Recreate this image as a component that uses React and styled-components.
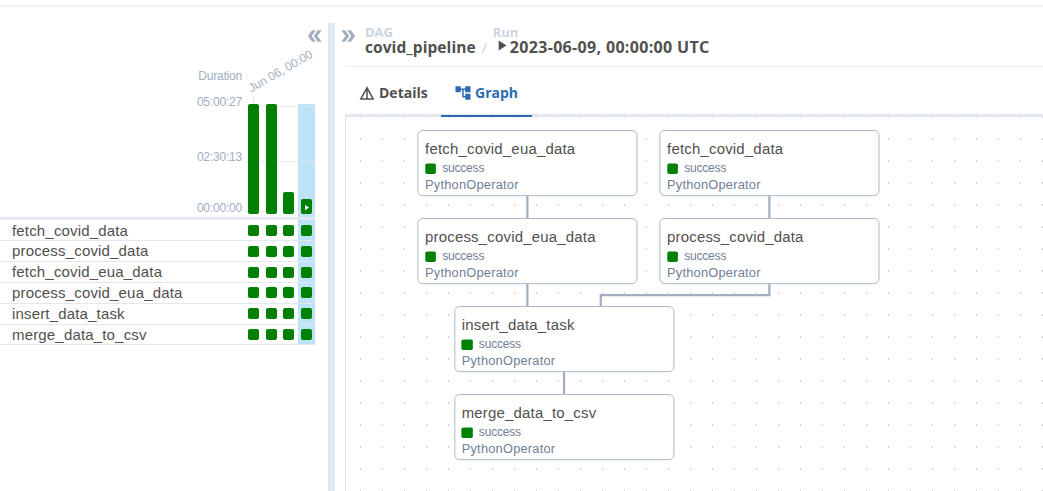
import React from "react";
import styled, { createGlobalStyle } from "styled-components";
import {
  MdDoubleArrow,
  MdAccountTree,
  MdDetails,
  MdPlayArrow,
} from "react-icons/md";

const color = {
  text: "#51504f",
  muted: "#a0aec0",
  faint: "#cbd5e0",
  slate: "#718096",
  line: "#e2e8f0",
  lineSoft: "#edf2f7",
  selected: "#bee3f8",
  success: "#008000",
  accent: "#2b6cb0",
};

const arial = `"Liberation Sans", Arial, sans-serif`;
const humanist = `"Open Sans", "Noto Sans", sans-serif`;

const GlobalStyle = createGlobalStyle`
  *, *::before, *::after { box-sizing: border-box; }
  body {
    margin: 0;
    background: #fff;
    color: ${color.text};
    font-family: ${arial};
    overflow: hidden;
  }
  svg { display: block; }
`;

const Page = styled.div`
  display: flex;
  flex-direction: column;
  width: 1043px;
  height: 491px;
  overflow: hidden;
`;

const TopRule = styled.div`
  flex: none;
  height: 7px;
  border-bottom: 2px solid ${color.lineSoft};
`;

const Main = styled.main`
  flex: 1;
  display: flex;
  min-height: 0;
`;

const Divider = styled.div`
  flex: none;
  width: 7px;
  margin-top: 16px;
  background: ${color.line};
`;

/* ---------- grid side ---------- */

const GridPanel = styled.section`
  flex: none;
  width: 328px;
  display: flex;
  flex-direction: column;
`;

const GridToolbar = styled.div`
  height: 62px;
  display: flex;
  justify-content: flex-end;
  padding: 19px 3px 0 0;
`;

const CollapseButton = styled.span`
  display: block;
  width: 20px;
  height: 20px;
  color: ${color.muted};
  transform: ${(p) => (p.$flip ? "rotate(180deg)" : "none")};
`;

const DurationChart = styled.div`
  display: flex;
  width: 315px;
  height: 151px;
  border-bottom: 3px solid ${color.line};
`;

const Axis = styled.div`
  width: 245px;
  padding-right: 3px;
  text-align: right;
`;

const AxisLabel = styled.div`
  height: 14px;
  line-height: 14px;
  margin-bottom: ${(p) => p.$gap || 0}px;
  font-size: 12px;
  letter-spacing: -0.2px;
  color: ${color.muted};
`;

const Plot = styled.div`
  position: relative;
  width: 70px;
  padding-top: 35px;
`;

const DateTick = styled.div`
  position: absolute;
  left: 8px;
  top: 27px;
  width: 1px;
  height: 8px;
  background: ${color.line};
`;

const DateLabel = styled.div`
  position: absolute;
  left: 8px;
  top: 12px;
  font-size: 12px;
  line-height: 14px;
  letter-spacing: -0.1px;
  white-space: nowrap;
  color: ${color.muted};
  transform-origin: 0 100%;
  transform: rotate(-30deg);
`;

const GridLine = styled.div`
  position: absolute;
  left: 0;
  right: 0;
  top: ${(p) => p.$top}px;
  height: 1px;
  background: ${color.line};
  opacity: 0.8;
`;

const Slots = styled.div`
  display: flex;
  height: ${(p) => (p.$tall ? "113px" : "100%")};
  width: 70px;
`;

const Slot = styled.div`
  flex: 1;
  display: flex;
  justify-content: center;
  align-items: ${(p) => (p.$bars ? "flex-end" : "flex-start")};
  padding-bottom: ${(p) => (p.$bars ? 3 : 0)}px;
  background: ${(p) => (p.$selected ? color.selected : "transparent")};
`;

const Bar = styled.div`
  position: relative;
  z-index: 1;
  width: 11px;
  border-radius: 2px;
  background: ${color.success};
  color: #fff;
  display: flex;
  align-items: center;
  justify-content: center;
  padding-top: 2px;
`;

const TaskList = styled.div`
  width: 315px;
`;

const TaskName = styled.div`
  width: 245px;
  padding-left: 12px;
  font-size: 15px;
  line-height: 20px;
  letter-spacing: 0.17px;
`;

const TaskRow = styled.div`
  display: flex;
  height: 21px;
  border-bottom: 1px solid ${color.line};
  &:last-child { height: 20px; }
  ${Slot} { padding-top: 4px; }
  &:nth-child(-n + 3) ${Slot} { padding-top: 5px; }
  &:first-child ${TaskName} { line-height: 22px; }
`;

const StatusBox = styled.span`
  display: block;
  flex: none;
  width: 11px;
  height: 11px;
  border-radius: 2px;
  background: ${color.success};
`;

/* ---------- details side ---------- */

const DetailsPanel = styled.section`
  flex: 1;
  min-width: 0;
  display: flex;
  flex-direction: column;
`;

const Header = styled.header`
  display: flex;
  height: 59px;
  padding: 19px 0 0 3px;
`;

const Crumbs = styled.nav`
  display: flex;
  margin-left: 7px;
  font-family: ${humanist};
`;

const Crumb = styled.div`
  display: flex;
  flex-direction: column;
`;

const CrumbLabel = styled.span`
  height: 13px;
  line-height: 13px;
  font-size: 13px;
  font-weight: 700;
  color: ${color.faint};
`;

const CrumbValue = styled.span`
  display: flex;
  height: 18px;
  line-height: 17px;
  font-size: ${(p) => (p.$date ? 16 : 15.5)}px;
  letter-spacing: ${(p) => (p.$date ? 0.33 : 0.08)}px;
  font-weight: 700;
  white-space: nowrap;
`;

const Slash = styled.span`
  width: 17px;
  padding-top: 12px;
  text-align: center;
  font-size: 15px;
  line-height: 18px;
  color: ${color.faint};
`;

const PlayMark = styled.span`
  width: 17px;
  height: 16px;
  margin-top: -2px;
`;

const Body = styled.div`
  flex: 1;
  display: flex;
  flex-direction: column;
  margin-left: 10px;
  min-height: 0;
  border-top: 1px solid ${color.lineSoft};
`;

const Tabs = styled.div`
  flex: none;
  display: flex;
  height: 50px;
  box-shadow: inset 0 -3px 0 ${color.line};
`;

const Tab = styled.div`
  display: flex;
  align-items: center;
  gap: 3px;
  width: ${(p) => p.$width}px;
  padding: 4px 0 0 13px;
  border-bottom: 2px solid ${(p) => (p.$active ? color.accent : "transparent")};
  color: ${(p) => (p.$active ? color.accent : color.text)};
  font-family: ${humanist};
  font-size: 14px;
  font-weight: 700;
`;

const TabText = styled.span`
  margin-top: -2px;
`;

const Canvas = styled.div`
  position: relative;
  flex: 1;
  overflow: hidden;
  border-left: 1px solid ${color.line};
`;

const Dots = styled.svg`
  position: absolute;
  inset: 0;
  width: 100%;
  height: 100%;
`;

const Plane = styled.div`
  position: absolute;
  left: 0;
  top: 0;
  transform-origin: 0 0;
  transform: translate(71.4px, 13.1px) scale(0.88);
`;

const Edges = styled.svg`
  position: absolute;
  left: 0;
  top: 0;
  overflow: visible;
`;

const Node = styled.div`
  position: absolute;
  left: ${(p) => p.$x}px;
  top: ${(p) => p.$y}px;
  width: 250px;
  height: 75px;
  padding: 9px 7.7px;
  border: 1.3px solid ${color.muted};
  border-radius: 6px;
  background: #fff;
`;

const NodeTitle = styled.div`
  height: 24px;
  line-height: 24px;
  font-size: 17px;
  letter-spacing: 0.22px;
`;

const NodeStatus = styled.div`
  display: flex;
  align-items: center;
  gap: 7px;
  height: 19px;
  font-size: 13.6px;
  letter-spacing: -0.2px;
  color: ${color.slate};
`;

const NodeBox = styled(StatusBox)`
  width: 12.5px;
  height: 12.5px;
  margin-top: 1px;
`;

const NodeOperator = styled.div`
  height: 18px;
  line-height: 18px;
  font-size: 14.6px;
  letter-spacing: 0.24px;
  color: ${color.slate};
`;

const runs = [{ height: 110 }, { height: 110 }, { height: 22 }, { height: 15, running: true }];

const tasks = [
  "fetch_covid_data",
  "process_covid_data",
  "fetch_covid_eua_data",
  "process_covid_eua_data",
  "insert_data_task",
  "merge_data_to_csv",
];

const nodes = [
  { name: "fetch_covid_eua_data", x: 0, y: 0 },
  { name: "fetch_covid_data", x: 275, y: 0 },
  { name: "process_covid_eua_data", x: 0, y: 100 },
  { name: "process_covid_data", x: 275, y: 100 },
  { name: "insert_data_task", x: 41.67, y: 200 },
  { name: "merge_data_to_csv", x: 41.67, y: 300 },
];

const edges = [
  "M125 75V100",
  "M400 75V100",
  "M125 175V200",
  "M400 175V187.5H208.33V200",
  "M166.67 275V300",
];

function GridView() {
  return (
    <GridPanel>
      <GridToolbar>
        <CollapseButton $flip>
          <MdDoubleArrow size={20} />
        </CollapseButton>
      </GridToolbar>
      <DurationChart>
        <Axis>
          <AxisLabel $gap={12}>Duration</AxisLabel>
          <AxisLabel $gap={41}>05:00:27</AxisLabel>
          <AxisLabel $gap={37}>02:30:13</AxisLabel>
          <AxisLabel>00:00:00</AxisLabel>
        </Axis>
        <Plot>
          <DateLabel>Jun 06, 00:00</DateLabel>
          <DateTick />
          <Slots $tall>
            {runs.map((run, i) => (
              <Slot key={i} $bars $selected={run.running}>
                <Bar style={{ height: run.height }}>
                  {run.running && <MdPlayArrow size={9} />}
                </Bar>
              </Slot>
            ))}
          </Slots>
          <GridLine $top={37} />
          <GridLine $top={92} />
          <GridLine $top={142} />
        </Plot>
      </DurationChart>
      <TaskList>
        {tasks.map((name) => (
          <TaskRow key={name}>
            <TaskName>{name}</TaskName>
            <Slots>
              {runs.map((run, i) => (
                <Slot key={i} $selected={run.running}>
                  <StatusBox />
                </Slot>
              ))}
            </Slots>
          </TaskRow>
        ))}
      </TaskList>
    </GridPanel>
  );
}

function Graph() {
  return (
    <Canvas>
      <Dots>
        <defs>
          <pattern id="dots" x="14" y="-1" width="22" height="22" patternUnits="userSpaceOnUse">
            <rect width="1" height="2" fill="#c9cacd" />
          </pattern>
        </defs>
        <rect width="100%" height="100%" fill="url(#dots)" />
      </Dots>
      <Plane>
        <Edges width="525" height="375" fill="none" stroke={color.muted} strokeWidth="2.5">
          {edges.map((d) => (
            <path key={d} d={d} />
          ))}
        </Edges>
        {nodes.map((n) => (
          <Node key={n.name} $x={n.x} $y={n.y}>
            <NodeTitle>{n.name}</NodeTitle>
            <NodeStatus>
              <NodeBox />
              success
            </NodeStatus>
            <NodeOperator>PythonOperator</NodeOperator>
          </Node>
        ))}
      </Plane>
    </Canvas>
  );
}

export default function App() {
  return (
    <Page>
      <GlobalStyle />
      <TopRule />
      <Main>
        <GridView />
        <Divider />
        <DetailsPanel>
          <Header>
            <CollapseButton>
              <MdDoubleArrow size={20} />
            </CollapseButton>
            <Crumbs>
              <Crumb>
                <CrumbLabel>DAG</CrumbLabel>
                <CrumbValue>covid_pipeline</CrumbValue>
              </Crumb>
              <Slash>/</Slash>
              <Crumb>
                <CrumbLabel>Run</CrumbLabel>
                <CrumbValue $date>
                  <PlayMark>
                    <MdPlayArrow size={17} />
                  </PlayMark>
                  2023-06-09, 00:00:00 UTC
                </CrumbValue>
              </Crumb>
            </Crumbs>
          </Header>
          <Body>
            <Tabs>
              <Tab $width={96}>
                <MdDetails size={18} />
                <TabText>Details</TabText>
              </Tab>
              <Tab $width={91} $active>
                <MdAccountTree size={18} />
                <TabText>Graph</TabText>
              </Tab>
            </Tabs>
            <Graph />
          </Body>
        </DetailsPanel>
      </Main>
    </Page>
  );
}
